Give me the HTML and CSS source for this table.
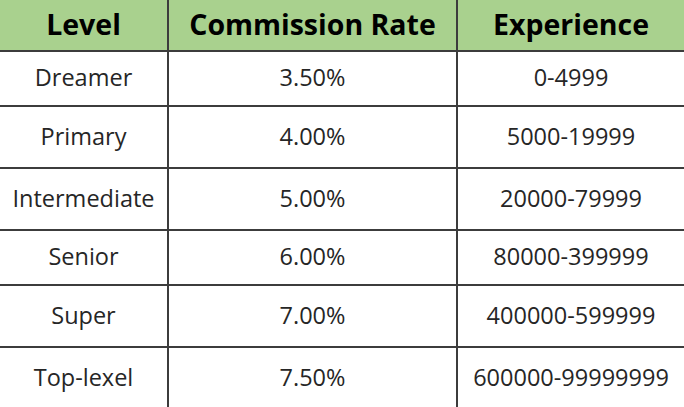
FILE: index.html
```html
<!DOCTYPE html>
<html>
<head>
<meta charset="utf-8">
<link rel="stylesheet" href="styles.css">
</head>
<body>
<div class="table">
  <div class="cell head">Level</div>
  <div class="cell head">Commission Rate</div>
  <div class="cell head">Experience</div>

  <div class="cell">Dreamer</div>
  <div class="cell">3.50%</div>
  <div class="cell">0-4999</div>

  <div class="cell">Primary</div>
  <div class="cell">4.00%</div>
  <div class="cell">5000-19999</div>

  <div class="cell">Intermediate</div>
  <div class="cell">5.00%</div>
  <div class="cell">20000-79999</div>

  <div class="cell">Senior</div>
  <div class="cell">6.00%</div>
  <div class="cell">80000-399999</div>

  <div class="cell">Super</div>
  <div class="cell">7.00%</div>
  <div class="cell">400000-599999</div>

  <div class="cell">Top-lexel</div>
  <div class="cell">7.50%</div>
  <div class="cell">600000-99999999</div>
</div>
</body>
</html>
```
FILE: styles.css
```css
html, body {
  margin: 0;
  padding: 0;
  background: #ffffff;
  overflow: hidden;
}
.table {
  width: 684px;
  display: grid;
  grid-template-columns: 167px 287px 226px;
  grid-template-rows: 50px 53px 60px 60px 53px 60px 60px;
  gap: 2px;
  background: #3c3c3c;
  font-family: "Open Sans", "Noto Sans", sans-serif;
}
.cell {
  background: #ffffff;
  display: flex;
  align-items: center;
  justify-content: center;
  font-size: 23.5px;
  color: #262626;
  white-space: nowrap;
  padding-bottom: 3px;
}
.head {
  background: #a9d18e;
  font-size: 28.5px;
  font-weight: 700;
  color: #000000;
  padding-bottom: 3px;
}
```
